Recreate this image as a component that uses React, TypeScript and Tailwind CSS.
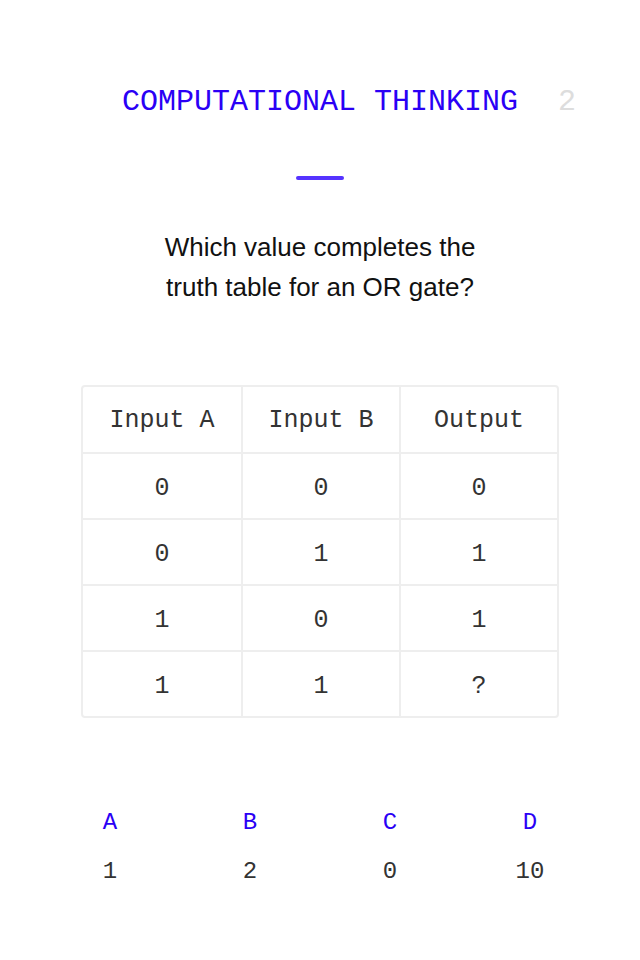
import React from 'react';

const mono = { fontFamily: '"Liberation Mono", "DejaVu Sans Mono", monospace' };

const rows = [
  ['0', '0', '0'],
  ['0', '1', '1'],
  ['1', '0', '1'],
  ['1', '1', '?'],
];

const options = [
  { key: 'A', value: '1' },
  { key: 'B', value: '2' },
  { key: 'C', value: '0' },
  { key: 'D', value: '10' },
];

export default function App() {
  return (
    <div className="w-[640px] h-[960px] bg-white flex flex-col items-center pt-[84px]">
      {/* Header */}
      <div className="relative w-full flex justify-center">
        <h1 className="text-[30px] leading-[36px] text-[#2a00f5]" style={mono}>
          COMPUTATIONAL THINKING
        </h1>
        <span className="absolute right-[64px] top-0 text-[30px] leading-[36px] text-[#dddddd]" style={mono}>
          2
        </span>
      </div>

      <div className="mt-[56px] w-12 h-1 rounded-full bg-[#5533ff]" />

      {/* Question */}
      <p
        className="mt-[47px] text-center text-[26px] leading-[40px] text-[#111]"
        style={{ fontFamily: '"Liberation Sans", Arial, sans-serif' }}
      >
        Which value completes the
        <br />
        truth table for an OR gate?
      </p>

      {/* Truth table */}
      <div className="mt-[78px] w-[478px] border-2 border-[#eeeeee] rounded-[4px] text-[25px] text-[#333]" style={mono}>
        <div className="grid grid-cols-3 h-[65px]">
          <div className="flex items-center justify-center pt-[3px]">Input A</div>
          <div className="flex items-center justify-center pt-[3px] border-l-2 border-[#eeeeee]">Input B</div>
          <div className="flex items-center justify-center pt-[3px] border-l-2 border-[#eeeeee]">Output</div>
        </div>
        {rows.map((r, i) => (
          <div key={i} className="grid grid-cols-3 h-[66px] border-t-2 border-[#eeeeee]">
            <div className="flex items-center justify-center pt-[5px]">{r[0]}</div>
            <div className="flex items-center justify-center pt-[5px] border-l-2 border-[#eeeeee]">{r[1]}</div>
            <div className="flex items-center justify-center pt-[5px] border-l-2 border-[#eeeeee]">{r[2]}</div>
          </div>
        ))}
      </div>

      {/* Answers */}
      <div className="mt-[89px] w-[480px] flex justify-between text-[24px] leading-[32px]" style={mono}>
        {options.map((o) => (
          <div key={o.key} className="w-[60px] flex flex-col items-center gap-[17px]">
            <span className="text-[#2a00f5]">{o.key}</span>
            <span className="text-[#333]">{o.value}</span>
          </div>
        ))}
      </div>
    </div>
  );
}
